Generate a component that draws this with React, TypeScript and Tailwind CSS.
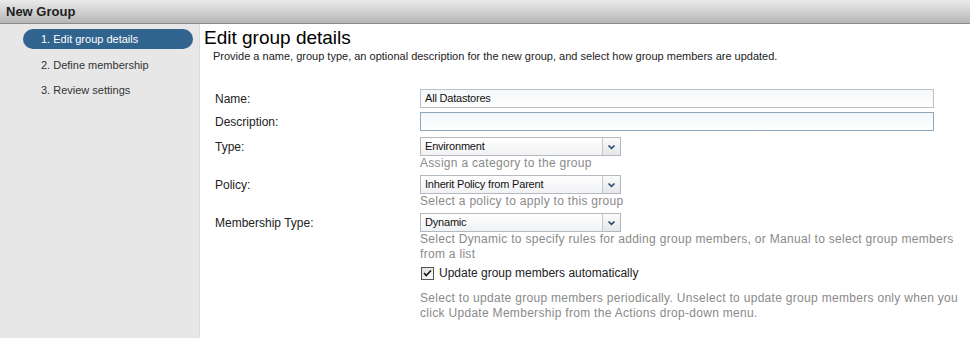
import React from "react";

const STEPS = ["1. Edit group details", "2. Define membership", "3. Review settings"];

function Chevron() {
  return (
    <svg width="9" height="6" viewBox="0 0 9 6">
      <path d="M1.5 1.5 L4.5 4.3 L7.5 1.5" fill="none" stroke="#2b4a70" strokeWidth="1.7" />
    </svg>
  );
}

function Select({ value }: { value: string }) {
  return (
    <div className="flex h-[19px] w-[201px] border border-[#b3b9c0] bg-gradient-to-b from-white to-[#f1f2f4]">
      <div className="flex flex-1 items-center pl-[4px] text-[11px] text-[#111] tracking-[-0.2px]">{value}</div>
      <div className="flex w-[18px] items-center justify-center border-l border-[#c4c8cc] bg-gradient-to-b from-[#fbfbfb] to-[#e4e6e8]">
        <Chevron />
      </div>
    </div>
  );
}

function Hint({ children }: { children: React.ReactNode }) {
  return <div className="text-[12px] leading-[15px] tracking-[0.3px] text-[#8a8a8a]">{children}</div>;
}

function Label({ children }: { children: React.ReactNode }) {
  return <div className="flex h-[19px] items-center text-[12px] text-[#222]">{children}</div>;
}

export default function App() {
  return (
    <div
      className="flex h-[338px] w-[970px] flex-col overflow-hidden bg-white"
      style={{ fontFamily: '"Liberation Sans", Arial, sans-serif' }}
    >
      <div className="flex h-[24px] shrink-0 items-center border-b border-[#8c8c8c] bg-gradient-to-b from-[#ebebeb] to-[#b6b6b6] pl-[6px] text-[13px] font-bold text-[#1e1e1e]">
        New Group
      </div>
      <div className="flex flex-1">
        <div className="flex w-[200px] shrink-0 flex-col gap-[5px] border-r border-[#dcdcdc] bg-[#e7e7e7] pl-[23px] pr-[6px] pt-[5px]">
          {STEPS.map((s, i) => (
            <div
              key={s}
              className={
                i === 0
                  ? "mb-[1px] flex h-[20px] items-center rounded-full bg-[#31638f] pl-[18px] text-[11px] text-white"
                  : "flex h-[20px] items-center pl-[18px] text-[11px] text-[#333]"
              }
            >
              {s}
            </div>
          ))}
        </div>
        <div className="flex-1 pt-[3px]">
          <div className="pl-[4px] text-[19px] leading-[22px] text-black">Edit group details</div>
          <div className="pl-[13px] text-[11px] leading-[14px] text-[#222]">
            Provide a name, group type, an optional description for the new group, and select how group members are updated.
          </div>
          <div className="mt-[26px] grid grid-cols-[205px_542px] pl-[15px]">
            <Label>Name:</Label>
            <div className="flex h-[19px] w-[514px] items-center border border-[#b9c2ca] bg-gradient-to-b from-[#f4f6f8] to-white pl-[4px] text-[11px] text-[#111] tracking-[-0.2px]">
              All Datastores
            </div>

            <div className="mt-[4px]">
              <Label>Description:</Label>
            </div>
            <div className="mt-[4px] h-[19px] w-[514px] border border-[#8fa7ba] bg-gradient-to-b from-[#f4f7fa] to-white" />

            <div className="mt-[6px]">
              <Label>Type:</Label>
            </div>
            <div className="mt-[6px]">
              <Select value="Environment" />
              <Hint>Assign a category to the group</Hint>
            </div>

            <div className="mt-[4px]">
              <Label>Policy:</Label>
            </div>
            <div className="mt-[4px]">
              <Select value="Inherit Policy from Parent" />
              <Hint>Select a policy to apply to this group</Hint>
            </div>

            <div className="mt-[4px]">
              <Label>Membership Type:</Label>
            </div>
            <div className="mt-[4px]">
              <Select value="Dynamic" />
              <Hint>
                Select Dynamic to specify rules for adding group members, or Manual to select group members from a list
              </Hint>
              <div className="mt-[3px] flex h-[16px] items-center gap-[5px] pl-[1px]">
                <svg width="13" height="13" viewBox="0 0 13 13">
                  <defs>
                    <linearGradient id="cb" x1="0" y1="0" x2="1" y2="1">
                      <stop offset="0" stopColor="#dcdcd8" />
                      <stop offset="1" stopColor="#ffffff" />
                    </linearGradient>
                  </defs>
                  <rect x="0.5" y="0.5" width="12" height="12" fill="url(#cb)" stroke="#555" />
                  <path d="M3 6 L5.2 8.5 L10 3.5" fill="none" stroke="#111" strokeWidth="1.6" />
                </svg>
                <span className="text-[12px] text-[#222]">Update group members automatically</span>
              </div>
              <div className="mt-[10px]">
                <Hint>
                  Select to update group members periodically. Unselect to update group members only when you click Update Membership from the Actions drop-down menu.
                </Hint>
              </div>
            </div>
          </div>
        </div>
      </div>
    </div>
  );
}
